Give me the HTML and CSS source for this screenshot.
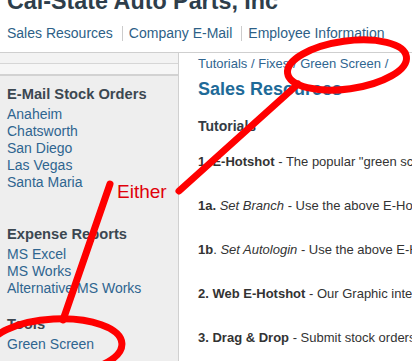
FILE: index.html
```
<!DOCTYPE html>
<html lang="en">

<head>
    <meta charset="UTF-8">
    <meta name="viewport" content="width=device-width, initial-scale=1.0">
    <title>Sales Resources - Cal-State Auto Parts</title>
    <link rel="stylesheet" href="styles.css">
</head>

<body>
    <header class="site-header">
        <h1>Cal-State Auto Parts, Inc</h1>
        <nav class="top-nav">
            <a href="#">Sales Resources</a><span class="sep"></span><a href="#">Company E-Mail</a><span class="sep"></span><a href="#">Employee Information</a>
        </nav>
    </header>

    <div class="layout">
        <aside class="sidebar">
            <div class="band"></div>
            <div class="band band-2"></div>

            <div class="side-group group-orders">
                <h3>E-Mail Stock Orders</h3>
                <a href="#">Anaheim</a>
                <a href="#">Chatsworth</a>
                <a href="#">San Diego</a>
                <a href="#">Las Vegas</a>
                <a href="#">Santa Maria</a>
            </div>

            <div class="side-group group-expense">
                <h3>Expense Reports</h3>
                <a href="#">MS Excel</a>
                <a href="#">MS Works</a>
                <a href="#">Alternative MS Works</a>
            </div>

            <div class="side-group">
                <h3>Tools</h3>
                <a href="#">Green Screen</a>
            </div>
        </aside>

        <main class="content">
            <div class="crumbs">
                <a href="#">Tutorials</a> / <a href="#">Fixes</a> / <a href="#">Green Screen</a> /
            </div>
            <h2>Sales Resources</h2>
            <h4>Tutorials</h4>

            <p class="item"><b>1. E-Hotshot</b> - The popular "green screen" program for entering stock orders.</p>
            <p class="item"><b>1a.</b> <i>Set Branch</i> - Use the above E-Hotshot to set your default branch.</p>
            <p class="item"><b>1b</b>. <i>Set Autologin</i> - Use the above E-Hotshot to log in automatically.</p>
            <p class="item"><b>2. Web E-Hotshot</b> - Our Graphic interface to E-Hotshot.</p>
            <p class="item"><b>3. Drag &amp; Drop</b> - Submit stock orders by dragging a file.</p>
        </main>
    </div>

    <!-- red hand-drawn annotation on top of the page -->
    <svg class="marks" width="412" height="361" viewBox="0 0 412 361">
        <ellipse cx="347" cy="65" rx="60" ry="24" transform="rotate(-8 347 65)" />
        <ellipse cx="55" cy="347" rx="67" ry="28" transform="rotate(-3 55 347)" />
        <line x1="179" y1="191" x2="298" y2="84" />
        <line x1="110" y1="184" x2="63" y2="320" />
    </svg>
    <span class="either">Either</span>
</body>

</html>
```

FILE: styles.css
```
/* Basic Reset */
html,
body {
    margin: 0;
    padding: 0;
    height: 100%;
    overflow: hidden;
    background: #ffffff;
    font-family: 'Liberation Sans', Arial, sans-serif;
    font-size: 14px;
    color: #333333;
}

body {
    position: relative;
}

a {
    color: #2f6590;
    text-decoration: none;
}

/* Header */
.site-header {
    padding-left: 7px;
    border-bottom: 1px solid #cfcfcf;
}

.site-header h1 {
    margin: -11px 0 0;
    font-size: 23.3px;
    line-height: 24px;
    font-weight: bold;
    color: #2e3e4b;
    white-space: nowrap;
}

.top-nav {
    padding: 12px 0 10px;
    line-height: 17px;
    white-space: nowrap;
}

.top-nav a {
    color: #2d5f87;
}

.top-nav .sep {
    display: inline-block;
    width: 1px;
    height: 15px;
    margin: 0 6px 0 9px;
    background: #cccccc;
    vertical-align: -3px;
}

/* Two columns */
.layout {
    display: flex;
}

.sidebar {
    width: 178px;
    flex: none;
    min-height: 320px;
    background: #eeeeee;
    border-right: 1px solid #d0d0d0;
}

.band {
    height: 10px;
    background: #f3f3f3;
    border-bottom: 1px solid #d6d6d6;
}

.band-2 {
    height: 10px;
    background: #f6f6f6;
    border-bottom: 2px solid #d2d2d2;
}

.side-group {
    display: flex;
    flex-direction: column;
    padding-left: 7px;
    line-height: 17px;
}

.side-group h3 {
    margin: 0 0 3px;
    font-size: 14.7px;
    line-height: 17px;
    color: #3b4751;
}

.group-orders {
    padding-top: 10px;
    margin-bottom: 35px;
}

.group-expense {
    margin-bottom: 19px;
}

/* Main column */
.content {
    flex: 1;
    min-width: 0;
    padding: 3px 0 0 19px;
    white-space: nowrap;
}

.crumbs {
    font-size: 13px;
    line-height: 16px;
    color: #2f6590;
}

.content h2 {
    margin: 6px 0 0;
    font-size: 18px;
    line-height: 22px;
    color: #1e6a98;
}

.content h4 {
    margin: 18px 0 0;
    font-size: 14px;
    line-height: 17px;
    color: #333c45;
}

.item {
    margin: 18px 0 0;
    font-size: 13px;
    line-height: 17px;
    color: #333333;
}

.item + .item {
    margin-top: 27px;
}

/* Annotation overlay */
.marks {
    position: absolute;
    left: 0;
    top: 0;
    pointer-events: none;
}

.marks ellipse,
.marks line {
    fill: none;
    stroke: #ff0000;
    stroke-width: 7;
    stroke-linecap: round;
}

.either {
    position: absolute;
    left: 117px;
    top: 182px;
    font-size: 19px;
    line-height: 19px;
    color: #e0000a;
}
```
